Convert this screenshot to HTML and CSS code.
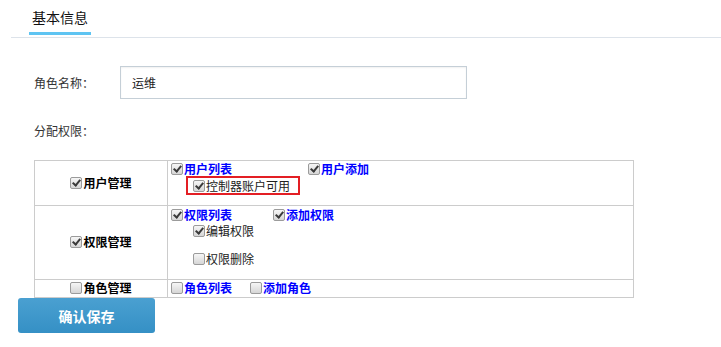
FILE: index.html
```html
<!DOCTYPE html>
<html lang="zh-CN">
  <head>
    <meta charset="utf-8">
    <title>角色编辑</title>
    <link rel="stylesheet" href="styles.css">
  </head>
  <body>
    <div class="tabs">
      <span class="tab active">基本信息</span>
    </div>

    <form class="role-form">
      <div class="form-row">
        <label class="form-label" for="role-name">角色名称：</label>
        <input class="text-input" id="role-name" type="text" value="运维">
      </div>

      <div class="form-row perm-title">
        <span class="form-label">分配权限：</span>
      </div>

      <table class="perm-table">
        <tr class="row-user">
          <td class="module">
            <label class="item"><input type="checkbox" checked>用户管理</label>
          </td>
          <td class="perms">
            <div class="line">
              <label class="item"><input type="checkbox" checked><a href="#">用户列表</a></label>
              <label class="item gap-wide"><input type="checkbox" checked><a href="#">用户添加</a></label>
            </div>
            <div class="line boxed">
              <label class="item plain"><input type="checkbox" checked>控制器账户可用</label>
            </div>
          </td>
        </tr>
        <tr class="row-perm">
          <td class="module">
            <label class="item"><input type="checkbox" checked>权限管理</label>
          </td>
          <td class="perms">
            <div class="line">
              <label class="item"><input type="checkbox" checked><a href="#">权限列表</a></label>
              <label class="item gap-mid"><input type="checkbox" checked><a href="#">添加权限</a></label>
            </div>
            <div class="line sub">
              <label class="item plain"><input type="checkbox" checked>编辑权限</label>
            </div>
            <div class="line sub spaced">
              <label class="item plain"><input type="checkbox">权限删除</label>
            </div>
          </td>
        </tr>
        <tr class="row-role">
          <td class="module">
            <label class="item"><input type="checkbox">角色管理</label>
          </td>
          <td class="perms">
            <div class="line">
              <label class="item"><input type="checkbox"><a href="#">角色列表</a></label>
              <label class="item gap-narrow"><input type="checkbox"><a href="#">添加角色</a></label>
            </div>
          </td>
        </tr>
      </table>

      <div class="actions">
        <button type="button" class="btn-save">确认保存</button>
      </div>
    </form>
  </body>
</html>
```

FILE: styles.css
```css
body {
  margin: 0;
  font-family: "Noto Sans CJK SC", "Noto Sans", sans-serif;
  font-size: 12px;
  color: #333;
  background: #fff;
}

/* tab header */
.tabs {
  margin-left: 11px;
  padding-left: 18px;
  height: 37px;
  border-bottom: 1px solid #dde3ea;
}
.tab {
  display: inline-block;
  padding: 7px 3px 0;
  height: 25px;
  line-height: 20px;
  font-size: 14px;
  color: #111;
}
.tab.active {
  border-bottom: 3px solid #5ec4f2;
}

/* form */
.role-form {
  margin: 0;
}
.form-row {
  display: flex;
  align-items: center;
  padding-left: 34px;
}
.form-row:first-child {
  margin-top: 28px;
}
.form-label {
  width: 86px;
  line-height: 20px;
  color: #333;
}
.text-input {
  width: 347px;
  height: 33px;
  box-sizing: border-box;
  padding: 0 11px;
  border: 1px solid #c5cfd7;
  box-shadow: inset 0 1px 2px rgba(0, 0, 0, 0.06);
  font-family: inherit;
  font-size: 12px;
  color: #222;
  outline: none;
}
.perm-title {
  margin-top: 22px;
  height: 20px;
}

/* permission table */
.perm-table {
  margin: 19px 0 0 34px;
  width: 600px;
  border-collapse: collapse;
}
.perm-table td {
  border: 1px solid #ccc;
  padding: 0;
}
.module {
  width: 132px;
  text-align: center;
  vertical-align: middle;
  color: #000;
  font-weight: bold;
}
.perms {
  vertical-align: top;
}
.row-user .perms {
  padding-bottom: 10px;
}
.row-user .line:first-child {
  height: 15px;
}
.row-perm .perms {
  padding: 1px 0 12px;
}
.line {
  display: flex;
  align-items: center;
  height: 16px;
  padding-left: 3px;
}
.line.sub {
  padding-left: 25px;
}
.line.spaced {
  margin-top: 12px;
}
.line.boxed {
  margin-left: 18px;
  padding-left: 5px;
  width: 114px;
  height: 19px;
  box-sizing: border-box;
  border: 2px solid #e31e24;
}

.item {
  display: inline-flex;
  align-items: center;
  line-height: 16px;
  white-space: nowrap;
}
.item a {
  color: #0000ff;
  font-weight: bold;
  text-decoration: none;
}
.item.plain {
  color: #222;
}
.gap-wide {
  margin-left: 76px;
}
.gap-mid {
  margin-left: 41px;
}
.gap-narrow {
  margin-left: 18px;
}

/* old style grey checkbox */
.item input[type="checkbox"] {
  appearance: none;
  -webkit-appearance: none;
  position: relative;
  width: 12px;
  height: 12px;
  margin: 0 1px 0 0;
  border: 1px solid #9b9b9b;
  border-radius: 2px;
  background: linear-gradient(#f6f6f6, #d6d6d6);
  flex: none;
}
.item input[type="checkbox"]:checked::after {
  content: "";
  position: absolute;
  left: 3px;
  top: 0;
  width: 3px;
  height: 6px;
  border: solid #3a3a3a;
  border-width: 0 2px 2px 0;
  transform: rotate(40deg);
}

/* save button */
.actions {
  padding-left: 18px;
}
.btn-save {
  width: 137px;
  height: 35px;
  border: 0;
  border-radius: 3px;
  background: linear-gradient(#4aa0d1, #3590c5);
  color: #fff;
  font-family: inherit;
  font-size: 14px;
  font-weight: bold;
  cursor: pointer;
}
```
